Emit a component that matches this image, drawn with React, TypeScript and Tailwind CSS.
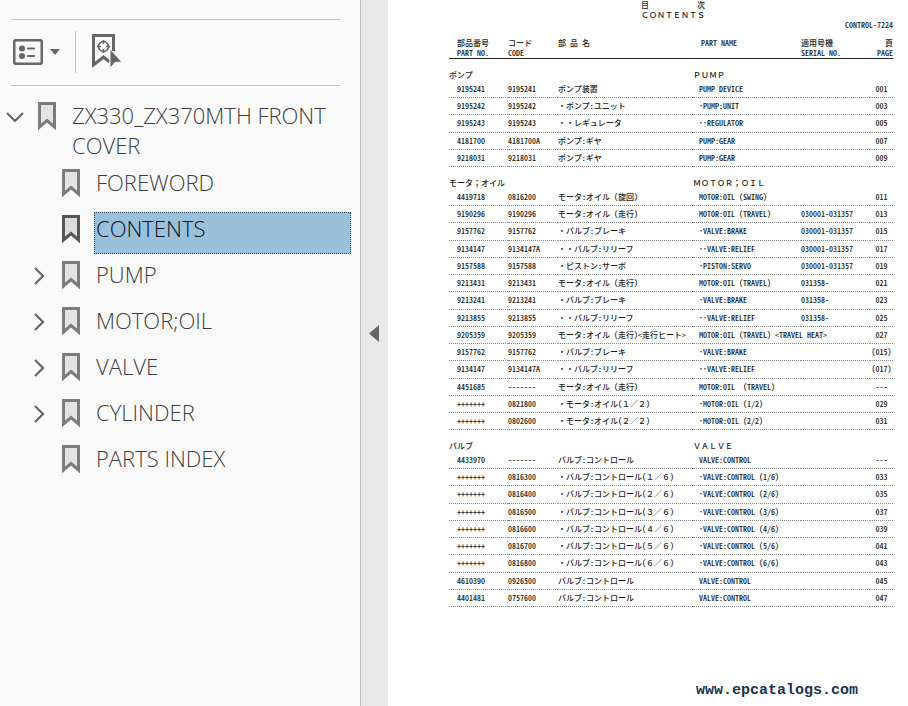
import { clsx } from "clsx";

type Row = [part: string, code: string, nameJa: string, name: string, serial: string, page: string];

type Section = {
  titleJa: string;
  title: string;
  rows: Row[];
};

const bookmarks = [
  { label: "FOREWORD", expandable: false, selected: false },
  { label: "CONTENTS", expandable: false, selected: true },
  { label: "PUMP", expandable: true, selected: false },
  { label: "MOTOR;OIL", expandable: true, selected: false },
  { label: "VALVE", expandable: true, selected: false },
  { label: "CYLINDER", expandable: true, selected: false },
  { label: "PARTS INDEX", expandable: false, selected: false },
];

const sections: Section[] = [
  {
    titleJa: "ポンプ",
    title: "PUMP",
    rows: [
      ["9195241", "9195241", "ポンプ装置", "PUMP DEVICE", "", "001"],
      ["9195242", "9195242", "・ポンプ:ユニット", "･PUMP:UNIT", "", "003"],
      ["9195243", "9195243", "・・レギュレータ", "･･REGULATOR", "", "005"],
      ["4181700", "4181700A", "ポンプ:ギヤ", "PUMP:GEAR", "", "007"],
      ["9218031", "9218031", "ポンプ:ギヤ", "PUMP:GEAR", "", "009"],
    ],
  },
  {
    titleJa: "モータ；オイル",
    title: "MOTOR;OIL",
    rows: [
      ["4419718", "0816200", "モータ:オイル (旋回)", "MOTOR:OIL (SWING)", "", "011"],
      ["9190296", "9190296", "モータ:オイル (走行)", "MOTOR:OIL (TRAVEL)", "030001-031357", "013"],
      ["9157762", "9157762", "・バルブ:ブレーキ", "･VALVE:BRAKE", "030001-031357", "015"],
      ["9134147", "9134147A", "・・バルブ:リリーフ", "･･VALVE:RELIEF", "030001-031357", "017"],
      ["9157588", "9157588", "・ピストン:サーボ", "･PISTON:SERVO", "030001-031357", "019"],
      ["9213431", "9213431", "モータ:オイル (走行)", "MOTOR:OIL (TRAVEL)", "031358-", "021"],
      ["9213241", "9213241", "・バルブ:ブレーキ", "･VALVE:BRAKE", "031358-", "023"],
      ["9213855", "9213855", "・・バルブ:リリーフ", "･･VALVE:RELIEF", "031358-", "025"],
      ["9205359", "9205359", "モータ:オイル (走行)<走行ヒート>", "MOTOR:OIL (TRAVEL) <TRAVEL HEAT>", "", "027"],
      ["9157762", "9157762", "・バルブ:ブレーキ", "･VALVE:BRAKE", "", "(015)"],
      ["9134147", "9134147A", "・・バルブ:リリーフ", "･･VALVE:RELIEF", "", "(017)"],
      ["4451685", "-------", "モータ:オイル (走行)", "MOTOR:OIL  (TRAVEL)", "", "---"],
      ["+++++++", "0821800", "・モータ:オイル(1/2)", "･MOTOR:OIL (1/2)", "", "029"],
      ["+++++++", "0802600", "・モータ:オイル(2/2)", "･MOTOR:OIL (2/2)", "", "031"],
    ],
  },
  {
    titleJa: "バルブ",
    title: "VALVE",
    rows: [
      ["4433970", "-------", "バルブ:コントロール", "VALVE:CONTROL", "", "---"],
      ["+++++++", "0816300", "・バルブ:コントロール(1/6)", "･VALVE:CONTROL (1/6)", "", "033"],
      ["+++++++", "0816400", "・バルブ:コントロール(2/6)", "･VALVE:CONTROL (2/6)", "", "035"],
      ["+++++++", "0816500", "・バルブ:コントロール(3/6)", "･VALVE:CONTROL (3/6)", "", "037"],
      ["+++++++", "0816600", "・バルブ:コントロール(4/6)", "･VALVE:CONTROL (4/6)", "", "039"],
      ["+++++++", "0816700", "・バルブ:コントロール(5/6)", "･VALVE:CONTROL (5/6)", "", "041"],
      ["+++++++", "0816800", "・バルブ:コントロール(6/6)", "･VALVE:CONTROL (6/6)", "", "043"],
      ["4610390", "0926500", "バルブ:コントロール", "VALVE:CONTROL", "", "045"],
      ["4401481", "0757600", "バルブ:コントロール", "VALVE:CONTROL", "", "047"],
    ],
  },
];

function BookmarkIcon({ active = false }: { active?: boolean }) {
  return (
    <svg viewBox="0 0 18 28" className="h-7 w-[18px] shrink-0" aria-hidden="true">
      <path
        d="M1.5 1.5h15v23.5L9 18.500l-7.5 6.500z"
        fill={active ? "#dcdcdc" : "#e3e3e3"}
        stroke={active ? "#565656" : "#7c7c7c"}
        strokeWidth="3"
      />
    </svg>
  );
}

function Chevron({ open = false }: { open?: boolean }) {
  return (
    <svg viewBox="0 0 18 18" className="h-[18px] w-[18px]" fill="none" stroke="#666" strokeWidth="2.200" aria-hidden="true">
      <path d={open ? "M1 5l8 8 8-8" : "M5 1l8 8-8 8"} />
    </svg>
  );
}

function Toolbar() {
  return (
    <div className="mt-[19px] mr-5 ml-[11px] flex h-[67px] items-center border-y border-[#c3c3c3] pb-0.5">
      <button type="button" aria-label="Bookmark options" className="ml-0.5 flex items-center gap-[7px]">
        <svg viewBox="0 0 30 26" className="h-[26px] w-[30px]" aria-hidden="true">
          <rect x="1.25" y="1.25" width="27.5" height="23.5" rx="1.5" fill="none" stroke="#666" strokeWidth="2.5" />
          <circle cx="9" cy="9.5" r="3" fill="#666" />
          <circle cx="9" cy="17" r="3" fill="#666" />
          <path d="M15 9.5h6M15 17h6" stroke="#666" strokeWidth="2.2" strokeLinecap="round" />
        </svg>
        <svg viewBox="0 0 10 6" className="h-1.5 w-2.5" aria-hidden="true">
          <path d="M0 0h10L5 6z" fill="#666" />
        </svg>
      </button>
      <span className="ml-[15px] h-[42px] w-px bg-[#c3c3c3]" />
      <button type="button" aria-label="Find current bookmark" className="ml-4">
        <svg viewBox="0 0 30 35" className="h-[35px] w-[30px]" aria-hidden="true">
          <path d="M21.500 17V1.500h-20v29.500l10-8 6 5" fill="none" stroke="#666" strokeWidth="3" />
          <circle cx="11.500" cy="12.500" r="5" fill="none" stroke="#666" strokeWidth="1.600" />
          <path d="M11.500 6v4M11.500 15v4M5 12.500h4M14 12.500h4" stroke="#666" strokeWidth="1.600" />
          <path d="M18 15l12 13-7 .5-5 6z" fill="#666" stroke="#fafafa" strokeWidth="1" />
        </svg>
      </button>
    </div>
  );
}

function Label({ text, selected = false }: { text: string; selected?: boolean }) {
  return (
    <a
      href="#contents"
      className={clsx(
        "min-h-[42px] flex-1 border border-dotted px-px text-[22px] leading-[30px]",
        selected ? "border-[#2d4a60] bg-[#9bc0d9] text-[#04101e]" : "border-transparent text-[#3c3c3c]"
      )}
    >
      {text}
    </a>
  );
}

function Sidebar() {
  return (
    <aside className="w-[361px] shrink-0 border-r border-[#bdbdbd] bg-[#fafafa] font-['Open_Sans',sans-serif] font-light">
      <Toolbar />
      <nav className="mt-[13px] pr-[9px]" aria-label="Bookmarks">
        <div className="mb-[5px] flex items-start gap-3.5 pl-1.5">
          <button type="button" aria-label="Collapse" className="mt-[9px]">
            <Chevron open />
          </button>
          <div className="mt-[3px]">
            <BookmarkIcon />
          </div>
          <Label text="ZX330_ZX370MTH FRONT COVER" />
        </div>
        <ul className="flex flex-col gap-1">
          {bookmarks.map((item) => (
            <li key={item.label} className="flex items-start gap-3.5 pl-[30px]">
              <div className="mt-[9px] w-[18px]">
                {item.expandable && (
                  <button type="button" aria-label={`Expand ${item.label}`} className="block">
                    <Chevron />
                  </button>
                )}
              </div>
              <div className="mt-[3px]">
                <BookmarkIcon active={item.selected} />
              </div>
              <Label text={item.label} selected={item.selected} />
            </li>
          ))}
        </ul>
      </nav>
    </aside>
  );
}

// Counters such as 1/6 are set full width, everything else half width
function NameJa({ text }: { text: string }) {
  return text.split(/(\d\/\d)/).map((piece, index) => (
    <span key={index} className={clsx(index === 1 && "[font-feature-settings:'fwid']")}>
      {piece}
    </span>
  ));
}

function PartsTable() {
  return (
    <table className="w-full table-fixed text-left leading-3 whitespace-pre">
      <colgroup>
        <col className="w-[59px]" />
        <col className="w-[50px]" />
        <col />
        <col className="w-[108px]" />
        <col className="w-[69px]" />
        <col className="w-[23px]" />
      </colgroup>
      <thead>
        <tr className="border-b border-[#222] align-top leading-[10px] [&>th]:font-medium">
          <th className="pl-2">部品番号{"\n"}PART NO.</th>
          <th>コード{"\n"}CODE</th>
          <th>部 品 名</th>
          <th className="pl-2">PART NAME</th>
          <th>適用号機{"\n"}SERIAL NO.</th>
          <th className="text-right">頁{"\n"}PAGE</th>
        </tr>
      </thead>
      {sections.map((section) => (
        <tbody key={section.title}>
          <tr className="h-[22px] align-bottom [font-feature-settings:'fwid']">
            <th colSpan={3} className="font-medium">
              {section.titleJa}
            </th>
            <th colSpan={3} className="font-medium">
              {section.title}
            </th>
          </tr>
          {section.rows.map(([part, code, nameJa, name, serial, page], index) => (
            <tr
              key={index}
              className="h-[17px] border-b border-dotted border-[#8a8a8a] align-top nth-[4n]:h-[18px] [&>td]:pt-0.5"
            >
              <td className="pl-2">{part}</td>
              <td>{code}</td>
              <td>
                <NameJa text={nameJa} />
              </td>
              <td className="pl-1.5">{name}</td>
              <td>{serial}</td>
              <td className="text-center">{page}</td>
            </tr>
          ))}
        </tbody>
      ))}
    </table>
  );
}

export default function App() {
  return (
    <div className="flex min-h-screen bg-white">
      <Sidebar />
      <div className="w-[27px] shrink-0 bg-[#e9e9e9] pt-[325px]">
        <button type="button" aria-label="Hide bookmarks" className="ml-2 block">
          <svg viewBox="0 0 10 17" className="h-[17px] w-2.5" aria-hidden="true">
            <path d="M10 0v17L0 8.500z" fill="#666" />
          </svg>
        </button>
      </div>
      <main
        id="contents"
        className="flex min-w-0 flex-1 flex-col pr-[15px] pl-[61px] font-['Noto_Sans_CJK_JP',sans-serif] text-[8px] font-medium text-[#1c1c1c] [font-feature-settings:'hwid']"
        lang="ja"
      >
        <header className="pl-1 leading-[10px]">
          <h1 className="mx-auto w-16 whitespace-nowrap [font-feature-settings:'fwid']">
            <span className="flex justify-between">
              <span>目</span>
              <span>次</span>
            </span>
            CONTENTS
          </h1>
          <p className="text-right">CONTROL-7224</p>
        </header>
        <div className="mt-2">
          <PartsTable />
        </div>
        <footer className="mt-auto pr-[35px] pb-1.5 text-right font-['Liberation_Mono',monospace] text-[15px] leading-[18px] font-bold text-[#1b3354]">
          <a href="#contents">www.epcatalogs.com</a>
        </footer>
      </main>
    </div>
  );
}
